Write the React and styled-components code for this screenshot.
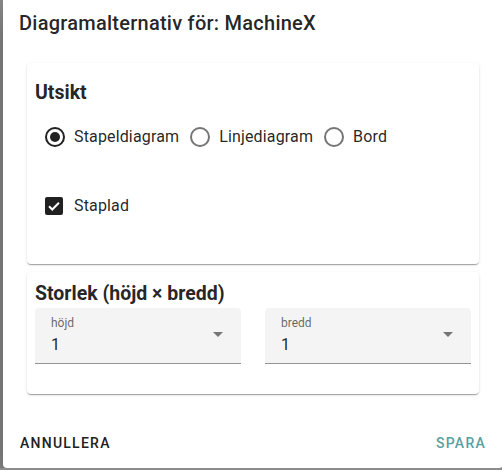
import React, { useState } from "react";
import styled, { createGlobalStyle } from "styled-components";

const GlobalStyle = createGlobalStyle`
  html, body {
    margin: 0;
    padding: 0;
    background: #8c8c8c;
    overflow: hidden;
    font-family: Roboto, "Liberation Sans", Arial, sans-serif;
  }
`;

const App = () => {
  const [view, setView] = useState("bar");
  const [stacked, setStacked] = useState(true);

  const options = [
    { id: "bar", label: "Stapeldiagram" },
    { id: "line", label: "Linjediagram" },
    { id: "table", label: "Bord" },
  ];

  return (
    <>
      <GlobalStyle />
      <Dialog>
        <Title>Diagramalternativ för: MachineX</Title>
        <Content>
          <Card $pad="16px 8px 37px">
            <CardHeading>Utsikt</CardHeading>
            <RadioGroup>
              {options.map((o) => (
                <Option key={o.id} onClick={() => setView(o.id)}>
                  <RadioIcon $checked={view === o.id} />
                  <OptionLabel>{o.label}</OptionLabel>
                </Option>
              ))}
            </RadioGroup>
            <CheckRow onClick={() => setStacked(!stacked)}>
              <CheckBox $checked={stacked}>
                {stacked && (
                  <svg width="16" height="16" viewBox="0 0 24 24">
                    <path
                      d="M3.5 12.5l5.5 5.5L20.5 6.5"
                      fill="none"
                      stroke="#fff"
                      strokeWidth="3.4"
                    />
                  </svg>
                )}
              </CheckBox>
              <OptionLabel>Staplad</OptionLabel>
            </CheckRow>
          </Card>
          <Card $pad="8px 8px 30px">
            <CardHeading>Storlek (höjd × bredd)</CardHeading>
            <Fields>
              <SelectField>
                <FieldLabel>höjd</FieldLabel>
                <FieldValue>1</FieldValue>
                <Arrow />
              </SelectField>
              <SelectField>
                <FieldLabel>bredd</FieldLabel>
                <FieldValue>1</FieldValue>
                <Arrow />
              </SelectField>
            </Fields>
          </Card>
        </Content>
        <Actions>
          <TextButton>Annullera</TextButton>
          <TextButton $primary>Spara</TextButton>
        </Actions>
      </Dialog>
    </>
  );
};

const Dialog = styled.div`
  margin-left: 3px;
  width: 500px;
  height: 468px;
  background: #fff;
  border-radius: 0 0 4px 4px;
  box-shadow: 0 11px 15px -7px rgba(0, 0, 0, 0.2),
    0 24px 38px 3px rgba(0, 0, 0, 0.14), 0 9px 46px 8px rgba(0, 0, 0, 0.12);
  display: flex;
  flex-direction: column;
  color: rgba(0, 0, 0, 0.87);
`;

const Title = styled.h2`
  margin: 0;
  padding: 7px 16px 0;
  font-size: 20px;
  font-weight: 500;
  line-height: 32px;
  letter-spacing: 0.25px;
`;

const Content = styled.div`
  margin-top: 24px;
  padding: 0 24px;
  display: flex;
  flex-direction: column;
  gap: 8px;
`;

const Card = styled.section`
  background: #fff;
  border-radius: 4px;
  padding: ${(p) => p.$pad};
  box-shadow: 0 2px 1px -1px rgba(0, 0, 0, 0.2),
    0 1px 1px 0 rgba(0, 0, 0, 0.14), 0 1px 3px 0 rgba(0, 0, 0, 0.12);
`;

const CardHeading = styled.h3`
  margin: 0;
  font-size: 19.5px;
  font-weight: 700;
  line-height: 28px;
`;

const RadioGroup = styled.div`
  display: flex;
  align-items: center;
  gap: 9px;
  height: 42px;
  margin-top: 9px;
  padding-left: 8px;
`;

const Option = styled.label`
  display: flex;
  align-items: center;
  gap: 7px;
  cursor: pointer;
`;

const RadioIcon = styled.span`
  width: 24px;
  height: 24px;
  display: flex;
  align-items: center;
  justify-content: center;
  position: relative;
  &::before {
    content: "";
    width: 16px;
    height: 16px;
    border-radius: 50%;
    border: 2px solid ${(p) => (p.$checked ? "#212121" : "#757575")};
  }
  &::after {
    content: "";
    display: ${(p) => (p.$checked ? "block" : "none")};
    position: absolute;
    width: 10px;
    height: 10px;
    border-radius: 50%;
    background: #212121;
    top: 7px;
    left: 7px;
  }
`;

const OptionLabel = styled.span`
  font-size: 16px;
  line-height: 24px;
  letter-spacing: 0.15px;
`;

const CheckRow = styled.label`
  display: flex;
  align-items: center;
  gap: 8px;
  height: 42px;
  margin-top: 27px;
  padding-left: 7px;
  cursor: pointer;
`;

const CheckBox = styled.span`
  width: 18px;
  height: 18px;
  margin: 3px;
  border-radius: 2px;
  box-sizing: border-box;
  background: ${(p) => (p.$checked ? "#212121" : "transparent")};
  border: 2px solid #212121;
  display: flex;
  align-items: center;
  justify-content: center;
`;

const Fields = styled.div`
  display: grid;
  grid-template-columns: 1fr 1fr;
  gap: 24px;
`;

const SelectField = styled.div`
  position: relative;
  background: #f4f4f4;
  border-radius: 4px 4px 0 0;
  border-bottom: 1px solid #949494;
  padding: 8px 16px 0;
  height: 47px;
`;

const FieldLabel = styled.div`
  font-size: 12px;
  line-height: 14px;
  color: rgba(0, 0, 0, 0.6);
`;

const FieldValue = styled.div`
  margin-top: 3px;
  font-size: 16px;
  line-height: 24px;
  color: rgba(0, 0, 0, 0.87);
`;

const Arrow = styled.span`
  position: absolute;
  right: 18px;
  top: 24px;
  width: 0;
  height: 0;
  border-left: 5px solid transparent;
  border-right: 5px solid transparent;
  border-top: 5px solid #757575;
`;

const Actions = styled.div`
  margin-top: auto;
  padding: 0 9px 7px;
  display: flex;
  justify-content: space-between;
  align-items: center;
`;

const TextButton = styled.button`
  height: 36px;
  padding: 0 8px;
  border: none;
  background: none;
  font-family: Roboto, "Liberation Sans", Arial, sans-serif;
  font-size: 14px;
  font-weight: 500;
  letter-spacing: 1.25px;
  text-transform: uppercase;
  color: ${(p) => (p.$primary ? "#5a9fa0" : "#212121")};
  cursor: pointer;
`;

export default App;
